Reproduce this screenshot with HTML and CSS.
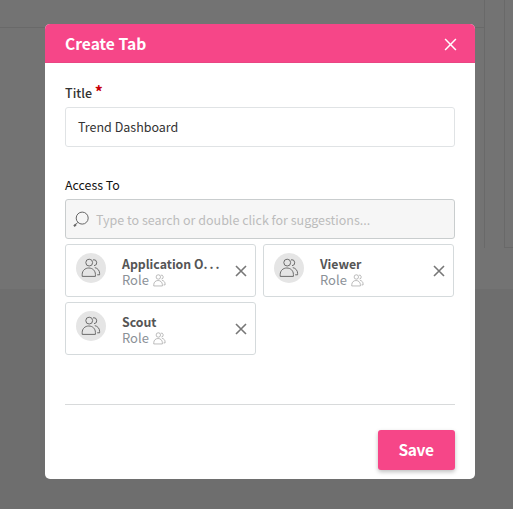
FILE: index.html
```
<!DOCTYPE html>
<html lang="en">
<head>
    <meta charset="utf-8">
    <title>Create Tab</title>
    <link rel="stylesheet" href="styles.css">
</head>
<body>
    <svg width="0" height="0" class="sprite">
        <symbol id="people" viewBox="0 0 20 20">
            <circle cx="8.2" cy="4.6" r="3.4"/>
            <path d="M1.2 18.4v-2c0-3.8 2.9-6.4 6.6-6.4s6.6 2.6 6.6 6.4v2z"/>
            <path d="M12 1.8a3 3 0 1 1 1 5.9M13.8 9.6c2.9.6 4.8 3 4.8 5.7v1.5h-2.4"/>
        </symbol>
        <symbol id="cross" viewBox="0 0 12 12">
            <path d="M1 1l10 10M11 1L1 11"/>
        </symbol>
    </svg>

    <div class="page">
        <div class="panel panel-main"><div class="panel-head"></div></div>
        <div class="panel panel-side"></div>
    </div>

    <div class="modal">
        <div class="modal-header">
            <h1>Create Tab</h1>
            <svg class="close"><use href="#cross"/></svg>
        </div>
        <div class="modal-body">
            <label class="label title-label">Title <span class="required">*</span></label>
            <div class="input">Trend Dashboard</div>

            <label class="label access-label">Access To</label>
            <div class="search">
                <svg class="search-icon" viewBox="0 0 16 16"><circle cx="9.2" cy="7.1" r="6"/><path d="M4.9 11.3L2.7 13.5"/><path class="handle" d="M3 13.2L1 15.2"/></svg>
                <span>Type to search or double click for suggestions...</span>
            </div>

            <div class="roles">
                <div class="role">
                    <div class="avatar"><svg><use href="#people"/></svg></div>
                    <div class="info">
                        <div class="name">Application O<span class="dots">...</span></div>
                        <div class="type">Role <svg><use href="#people"/></svg></div>
                    </div>
                    <svg class="remove"><use href="#cross"/></svg>
                </div>
                <div class="role">
                    <div class="avatar"><svg><use href="#people"/></svg></div>
                    <div class="info">
                        <div class="name">Viewer</div>
                        <div class="type">Role <svg><use href="#people"/></svg></div>
                    </div>
                    <svg class="remove"><use href="#cross"/></svg>
                </div>
                <div class="role">
                    <div class="avatar"><svg><use href="#people"/></svg></div>
                    <div class="info">
                        <div class="name">Scout</div>
                        <div class="type">Role <svg><use href="#people"/></svg></div>
                    </div>
                    <svg class="remove"><use href="#cross"/></svg>
                </div>
            </div>

            <div class="footer">
                <button class="save">Save</button>
            </div>
        </div>
    </div>
</body>
</html>
```
FILE: styles.css
```
* { box-sizing: border-box; }
body {
  margin: 0;
  height: 509px;
  overflow: hidden;
  padding: 24px 0 0 45px;
  background: #6e6e6e;
  font-family: "Source Sans Pro", "Noto Sans CJK SC", sans-serif;
  color: #333;
}
svg { display: block; fill: none; stroke: currentColor; }
.sprite { position: absolute; }

/* dimmed page under the dialog */
.page {
  position: absolute;
  top: 0;
  left: 0;
  width: 513px;
  height: 289px;
  background: #737373;
  display: flex;
  gap: 19px;
  overflow: hidden;
}
.panel { height: 248px; border: 1px solid #696969; border-top: 0; }
.panel-main { width: 485px; border-left: 0; border-bottom: 0; flex: none; }
.panel-side { width: 30px; flex: none; }
.panel-head { height: 28px; border-bottom: 1px solid #696969; }

.modal {
  position: relative;
  width: 430px;
  height: 455px;
  background: #fff;
  border-radius: 5px;
  overflow: hidden;
}
.modal-header {
  height: 39px;
  padding: 1px 18px 0 20px;
  background: #f64688;
  border-bottom: 1px solid #e94683;
  color: #fff;
  display: flex;
  align-items: center;
  justify-content: space-between;
}
h1 { margin: 0 0 1px; font-size: 15.6px; line-height: 24px; font-weight: 700; }
.close { width: 13px; height: 13px; stroke-width: 1.4; margin-top: 1px; }

.modal-body { padding: 20px 20px 0; }
.label { display: block; height: 20px; font-size: 12.5px; line-height: 20px; font-weight: 500; }
.required { color: #c8000a; font-weight: 700; font-size: 16px; line-height: 1px; }
.input {
  height: 40px;
  margin-top: 4px;
  padding: 0 12px;
  border: 1px solid #e0e3e5;
  border-radius: 3px;
  font-size: 12.5px;
  line-height: 38px;
}
.access-label { margin-top: 28px; color: #111; font-size: 12.4px; font-weight: 400; }
.search {
  height: 40px;
  margin-top: 4px;
  padding: 0 7px;
  border: 1px solid #c9cdce;
  border-radius: 3px;
  background: #f6f6f6;
  display: flex;
  align-items: center;
  gap: 7px;
  font-size: 12.5px;
  color: #bcbcbc;
}
.search-icon { width: 16px; height: 16px; color: #666; }
.search-icon .handle { stroke-width: 2; }

.roles { display: flex; flex-wrap: wrap; gap: 5px 7px; margin-top: 5px; }
.role {
  width: 191px;
  height: 53px;
  padding: 0 8px 0 10px;
  border: 1px solid #d5dadc;
  border-radius: 3px;
  display: flex;
}
.avatar {
  width: 30px;
  height: 30px;
  margin-top: 8px;
  border-radius: 50%;
  background: #e5e5e5;
  color: #6c6c6c;
  display: flex;
  align-items: center;
  justify-content: center;
}
.avatar svg { width: 20px; height: 20px; }
.info { flex: 1; margin: 11px 0 0 16px; font-size: 12.3px; line-height: 16px; white-space: nowrap; }
.name { font-weight: 700; color: #555; }
.dots { letter-spacing: 2px; }
.type { display: flex; gap: 4px; color: #8b9197; font-size: 13px; }
.type svg { width: 13px; height: 13px; margin-top: 2px; color: #999; }
.remove { width: 12px; height: 12px; margin-top: 20px; color: #777; stroke-width: 1.6; }

.footer {
  margin-top: 49px;
  padding-top: 25px;
  border-top: 1px solid #d8dadb;
  display: flex;
  justify-content: flex-end;
}
.save {
  width: 77px;
  height: 40px;
  padding: 0 1px 1px 0;
  border: 0;
  border-radius: 3px;
  background: #f64688;
  box-shadow: 0 2px 4px rgba(0, 0, 0, .25);
  color: #fff;
  font: 700 15.5px/39px "Source Sans Pro", "Noto Sans CJK SC", sans-serif;
  letter-spacing: -.4px;
}
```
